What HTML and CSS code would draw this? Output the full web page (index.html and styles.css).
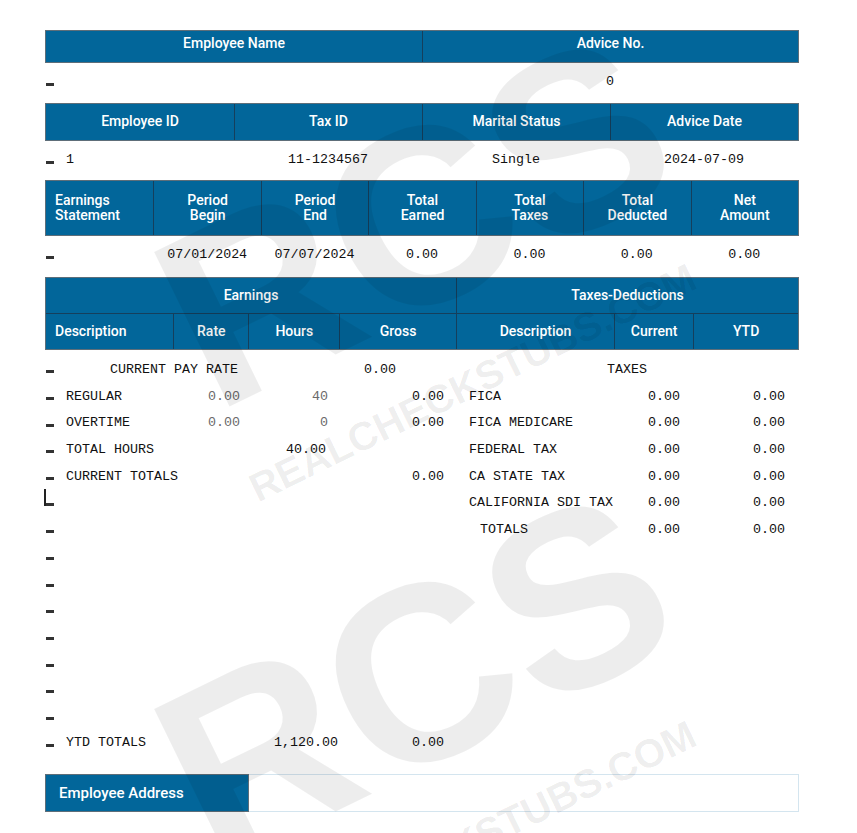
FILE: index.html
```html
<!DOCTYPE html>
<html>
<head>
<meta charset="utf-8">
<title>Pay Stub</title>
<link rel="stylesheet" href="styles.css">
</head>
<body>
<div class="page">
  <div class="head c2 h-name">
    <div class="th">Employee Name</div>
    <div class="th">Advice No.</div>
  </div>
  <div class="data c2 d-1">
    <div class="td td-lead"><span class="dash"></span></div>
    <div class="td">0</div>
  </div>

  <div class="head c4 h-ids">
    <div class="th">Employee ID</div>
    <div class="th">Tax ID</div>
    <div class="th">Marital Status</div>
    <div class="th">Advice Date</div>
  </div>
  <div class="data c4 d-2">
    <div class="td td-lead"><span class="dash"></span>1</div>
    <div class="td">11-1234567</div>
    <div class="td">Single</div>
    <div class="td">2024-07-09</div>
  </div>

  <div class="head c7 h-earn">
    <div class="th th-left">Earnings<br>Statement</div>
    <div class="th">Period<br>Begin</div>
    <div class="th">Period<br>End</div>
    <div class="th">Total<br>Earned</div>
    <div class="th">Total<br>Taxes</div>
    <div class="th">Total<br>Deducted</div>
    <div class="th">Net<br>Amount</div>
  </div>
  <div class="data c7 d-3">
    <div class="td td-lead"><span class="dash"></span></div>
    <div class="td">07/01/2024</div>
    <div class="td">07/07/2024</div>
    <div class="td">0.00</div>
    <div class="td">0.00</div>
    <div class="td">0.00</div>
    <div class="td">0.00</div>
  </div>

  <div class="ledger-head">
    <div class="th span-earn">Earnings</div>
    <div class="th span-tax">Taxes-Deductions</div>
    <div class="th sub sub-first th-left">Description</div>
    <div class="th sub">Rate</div>
    <div class="th sub">Hours</div>
    <div class="th sub">Gross</div>
    <div class="th sub">Description</div>
    <div class="th sub">Current</div>
    <div class="th sub">YTD</div>
  </div>

  <div class="ledger-body">
    <div class="side-earn">
      <div class="lrow lrow-rate">
        <div class="mark"><span class="dash"></span></div>
        <div class="desc">CURRENT PAY RATE</div>
        <div class="num"></div>
        <div class="num"></div>
        <div class="num">0.00</div>
      </div>
      <div class="lrow">
        <div class="mark"><span class="dash"></span></div>
        <div class="desc">REGULAR</div>
        <div class="num muted">0.00</div>
        <div class="num muted">40</div>
        <div class="num">0.00</div>
      </div>
      <div class="lrow">
        <div class="mark"><span class="dash"></span></div>
        <div class="desc">OVERTIME</div>
        <div class="num muted">0.00</div>
        <div class="num muted">0</div>
        <div class="num">0.00</div>
      </div>
      <div class="lrow lrow-hours">
        <div class="mark"><span class="dash"></span></div>
        <div class="desc">TOTAL HOURS</div>
        <div class="num"></div>
        <div class="num">40.00</div>
        <div class="num"></div>
      </div>
      <div class="lrow">
        <div class="mark"><span class="dash"></span></div>
        <div class="desc">CURRENT TOTALS</div>
        <div class="num"></div>
        <div class="num"></div>
        <div class="num">0.00</div>
      </div>
      <div class="lrow">
        <div class="mark mark-cursor"><span class="caret"></span><span class="dash"></span></div>
      </div>
      <div class="lrow"><div class="mark"><span class="dash"></span></div></div>
      <div class="lrow"><div class="mark"><span class="dash"></span></div></div>
      <div class="lrow"><div class="mark"><span class="dash"></span></div></div>
      <div class="lrow"><div class="mark"><span class="dash"></span></div></div>
      <div class="lrow"><div class="mark"><span class="dash"></span></div></div>
      <div class="lrow"><div class="mark"><span class="dash"></span></div></div>
      <div class="lrow"><div class="mark"><span class="dash"></span></div></div>
      <div class="lrow"><div class="mark"><span class="dash"></span></div></div>
      <div class="lrow lrow-ytd">
        <div class="mark"><span class="dash"></span></div>
        <div class="desc">YTD TOTALS</div>
        <div class="num"></div>
        <div class="num">1,120.00</div>
        <div class="num">0.00</div>
      </div>
    </div>
    <div class="side-tax">
      <div class="trow trow-title"><div></div><div class="desc">TAXES</div></div>
      <div class="trow"><div></div><div class="desc">FICA</div><div class="num">0.00</div><div class="num">0.00</div></div>
      <div class="trow"><div></div><div class="desc">FICA MEDICARE</div><div class="num">0.00</div><div class="num">0.00</div></div>
      <div class="trow"><div></div><div class="desc">FEDERAL TAX</div><div class="num">0.00</div><div class="num">0.00</div></div>
      <div class="trow"><div></div><div class="desc">CA STATE TAX</div><div class="num">0.00</div><div class="num">0.00</div></div>
      <div class="trow"><div></div><div class="desc">CALIFORNIA SDI TAX</div><div class="num">0.00</div><div class="num">0.00</div></div>
      <div class="trow trow-total"><div></div><div class="desc">TOTALS</div><div class="num">0.00</div><div class="num">0.00</div></div>
    </div>
  </div>

  <div class="addr">
    <div class="addr-label">Employee Address</div>
    <div class="addr-box"></div>
  </div>

  <div class="wm" aria-hidden="true">
    <div class="wm-unit wm-top"><span class="wm-big">RCS</span><span class="wm-small">REALCHECKSTUBS.COM</span></div>
    <div class="wm-unit wm-bottom"><span class="wm-big">RCS</span><span class="wm-small">REALCHECKSTUBS.COM</span></div>
  </div>
</div>
</body>
</html>
```

FILE: styles.css
```css
* { box-sizing: border-box; }

body {
  margin: 0;
  background: #ffffff;
  font-family: "Liberation Mono", "Courier New", monospace;
  font-size: 13.33px;
  color: #111111;
}

.page {
  position: relative;
  width: 857px;
  height: 833px;
  overflow: hidden;
  padding: 30px 58px 0 45px;
}

/* ---------- header bars ---------- */
.head {
  display: grid;
  background: #02669a;
  border: 1px solid #5e6e79;
  color: #ffffff;
  font-family: Roboto, "Noto Sans", sans-serif;
  font-weight: 500;
  font-size: 14px;
}

.th {
  display: flex;
  align-items: center;
  justify-content: center;
  text-align: center;
  line-height: 15px;
  border-left: 1px solid #153f5c;
}
.head .th:first-child { border-left: 0; }

.th-left {
  justify-content: flex-start;
  text-align: left;
  padding-left: 9px;
}

.c2 { grid-template-columns: 1fr 1fr; }
.c4 { grid-template-columns: repeat(4, 1fr); }
.c7 { grid-template-columns: repeat(7, 1fr); }

.h-name { height: 33px; }
.h-name .th { padding-bottom: 6px; }
.h-ids { height: 38.6px; }
.h-earn { height: 56px; }

/* ---------- data rows ---------- */
.data {
  display: grid;
  padding: 0 1px;
}
.td {
  display: flex;
  align-items: center;
  justify-content: center;
  white-space: nowrap;
}
.td-lead { justify-content: flex-start; }

.d-1 { height: 39.7px; }
.d-1 .td { padding-bottom: 2px; }
.d-2 { height: 38.7px; }
.d-2 .td { padding-bottom: 2px; }
.d-3 { height: 40.7px; }
.d-3 .td { padding-bottom: 3px; }

.dash {
  display: block;
  flex: none;
  width: 8px;
  height: 3px;
  background: #333333;
  margin-top: 5px;
  margin-right: 12px;
}

/* ---------- earnings / taxes ledger ---------- */
.ledger-head {
  display: grid;
  grid-template-columns: 127.3px 75px 91px 116.7px 158px 79.3px 104.7px;
  grid-template-rows: 35px 36px;
  background: #02669a;
  border: 1px solid #5e6e79;
  color: #ffffff;
  font-family: Roboto, "Noto Sans", sans-serif;
  font-weight: 500;
  font-size: 14px;
}
.span-earn { grid-column: 1 / 5; border-left: 0; }
.span-tax { grid-column: 5 / 8; }
.sub { border-top: 1px solid #153f5c; }
.sub-first { border-left: 0; }

.ledger-body {
  display: flex;
  padding-top: 6.5px;
}
.side-earn { width: 411px; }
.side-tax { width: 343px; }

.lrow {
  display: grid;
  grid-template-columns: 21px 124px 50px 88px 116px;
  height: 26.67px;
  align-items: center;
  white-space: nowrap;
}
.trow {
  display: grid;
  grid-template-columns: 13px 140px 71px 105px;
  height: 26.67px;
  align-items: center;
  white-space: nowrap;
}

.num { text-align: right; }
.muted { color: #6a6a6a; }

.mark {
  display: flex;
  align-items: center;
  height: 100%;
}
.mark .dash { margin: 5px 0 0 1px; }

.mark-cursor { align-items: flex-start; }
.caret {
  display: block;
  width: 2px;
  height: 16.3px;
  background: #222222;
  margin-left: -1px;
}
.mark-cursor .dash { margin: 14px 0 0 0; height: 2.5px; }

.lrow-rate .desc { padding-left: 44px; }
.lrow-rate .num:last-child { padding-right: 48px; }
.lrow-hours .num:nth-child(4) { padding-right: 2px; }
.lrow-ytd .num:nth-child(4) { margin-right: -10px; }

.trow-title .desc { padding-left: 138px; }
.trow-total .desc { padding-left: 11px; }

/* ---------- address ---------- */
.addr {
  display: flex;
  margin-top: 18.2px;
  height: 37.7px;
}
.addr-label {
  width: 204px;
  display: flex;
  align-items: center;
  padding-left: 13px;
  background: #02669a;
  border: 1px solid #5e6e79;
  color: #ffffff;
  font-family: Roboto, "Noto Sans", sans-serif;
  font-weight: 500;
  font-size: 15px;
}
.addr-box {
  flex: 1;
  border: 1px solid #d4e5ef;
  border-left: 0;
}

/* ---------- watermark ---------- */
.wm {
  position: absolute;
  inset: 0;
  pointer-events: none;
  overflow: hidden;
  z-index: 5;
}
.wm-unit {
  position: absolute;
  transform-origin: 0 0;
  transform: rotate(-26deg);
  color: rgba(0, 0, 0, 0.07);
  font-family: "Liberation Sans", Arial, sans-serif;
  font-weight: 700;
  white-space: nowrap;
  line-height: 1;
}
.wm-top { left: 122px; top: 224px; }
.wm-bottom { left: 122px; top: 681px; }
.wm-big {
  display: block;
  font-size: 250px;
  height: 250px;
}
.wm-small {
  display: block;
  font-size: 40px;
  margin-top: 25.7px;
  margin-left: 0;
}
```
